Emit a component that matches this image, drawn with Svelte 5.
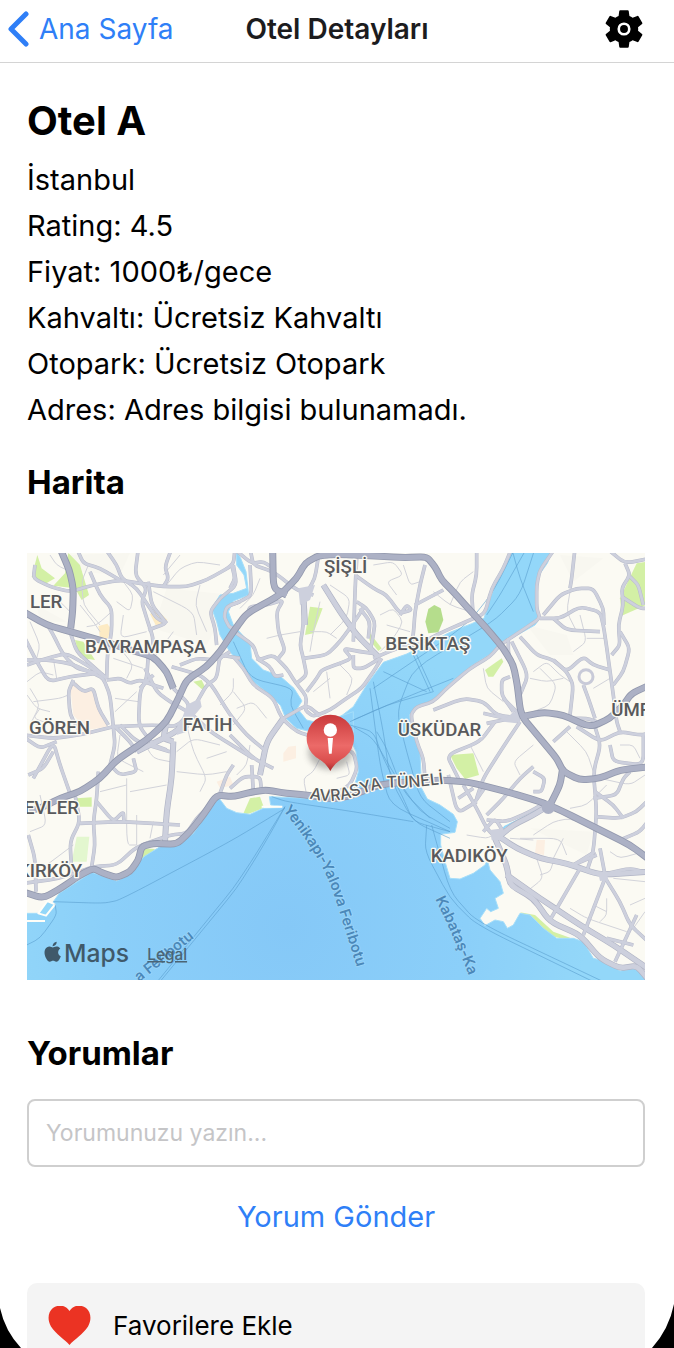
<script>
  const details = [
    'İstanbul',
    'Rating: 4.5',
    'Fiyat: 1000₺/gece',
    'Kahvaltı: Ücretsiz Kahvaltı',
    'Otopark: Ücretsiz Otopark',
    'Adres: Adres bilgisi bulunamadı.'
  ];

  let comment = $state('');

  // Turns a list of "x,y" points into a path whose corners are rounded.
  function curve(points) {
    const p = points.split(' ').map((s) => s.split(',').map(Number));
    let d = `M${p[0][0]} ${p[0][1]}`;
    for (let i = 1; i < p.length - 1; i++) {
      const [x, y] = p[i];
      const [nx, ny] = p[i + 1];
      const [px, py] = p[i - 1];
      d += `L${x + (px - x) * 0.3} ${y + (py - y) * 0.3}Q${x} ${y} ${x + (nx - x) * 0.3} ${y + (ny - y) * 0.3}`;
    }
    const last = p[p.length - 1];
    return d + `L${last[0]} ${last[1]}`;
  }

  const water = [
    '0,1105 75,1105 100,1070 118,1045 160,1018 215,982 245,992 290,1008 332,988 352,955 372,935 420,905 475,900 520,865 560,810 596,758 620,790 650,803 690,808 730,790 785,788 785,784 752,780 748,755 860,760 935,768 1000,735 1015,680 1008,620 985,570 955,520 1000,485 1040,420 1090,352 1160,327 1195,310 1290,262 1355,236 1392,220 1412,155 1440,90 1462,45 1475,0 1605,0 1582,55 1550,100 1546,180 1558,222 1545,240 1460,288 1410,328 1355,362 1290,420 1245,465 1190,488 1168,510 1174,550 1200,620 1205,730 1222,762 1260,780 1300,808 1312,830 1305,862 1262,868 1262,900 1275,950 1290,1000 1320,1002 1360,985 1395,960 1402,945 1410,975 1440,1010 1450,1045 1425,1060 1435,1090 1412,1100 1400,1090 1380,1120 1395,1142 1425,1125 1450,1130 1462,1150 1480,1140 1500,1105 1530,1110 1570,1150 1610,1180 1660,1180 1690,1190 1720,1240 1760,1250 1800,1278 1850,1270 1900,1330 1900,1400 0,1400',
    '600,150 640,145 680,130 672,90 650,60 650,20 662,40 678,80 686,150 640,168 625,200 640,240 690,295 695,340 730,375 780,393 822,430 846,468 832,490 860,525 900,535 1000,500 1000,570 880,562 830,550 797,520 782,482 750,450 700,410 670,370 628,318 600,270 590,230 575,190'
  ];

  const highways = [
    '120,10 148,75 160,130 158,200 152,250',
    '10,200 80,240 150,260 240,285 330,315 400,335 440,380 460,430',
    '10,800 60,790 120,760 180,740 240,700 290,645 380,585 440,530 475,460 500,405 560,365 600,320 640,260 680,205 780,150 830,100 855,55 895,32 950,28 1050,32 1150,38 1220,35 1245,65 1265,105 1300,140 1340,185 1400,250 1450,310 1480,360 1492,420 1500,490 1510,520 1560,580 1610,640 1630,680 1680,705 1740,700 1800,675 1890,665',
    '758,10 760,130 800,150',
    '1505,515 1570,502 1630,510 1690,538 1720,543 1770,520 1810,480 1835,445 1890,420',
    '0,1038 70,1060 130,1025 180,990 220,970 250,985 290,998 330,980 355,945 365,905 400,895 470,898 510,860 550,810 590,750 640,755 700,740 740,735 800,745 860,750 940,762 1000,750 1080,718 1180,710 1270,705 1350,712 1460,740 1560,770 1620,795 1740,855 1830,900 1890,945',
    '1628,670 1620,720 1585,790'
  ];

  const roads = [
    '45,60 40,100 90,125 150,140 220,120 300,105 360,115 430,125 500,125 560,105 640,60 645,10',
    '170,10 190,55 240,70 300,105',
    '255,10 290,60 305,100 350,130 390,190 410,220 440,235 385,255',
    '210,80 240,150 275,190 275,260 262,330 260,400',
    '355,10 345,90 380,130 365,170 380,220 400,280 395,330',
    '385,110 395,180 440,235',
    '455,10 435,65 445,100 430,125',
    '10,345 80,345 150,355 220,385 250,400 270,450 280,545 285,600 270,660',
    '10,270 45,340 85,410 150,395 230,385',
    '75,230 95,260 130,330 170,370 230,385',
    '21,360 80,340 140,325 200,360 260,400',
    '150,260 170,320 220,365 260,400',
    '260,405 300,400 330,415 360,405 400,420 430,430',
    '385,330 380,400 360,440 355,540 400,600 440,615',
    '375,370 410,440 450,470 520,510 570,560 700,640',
    '400,390 360,430',
    '280,545 400,540 470,545 520,490 560,420 590,400 600,330 660,340',
    '455,365 540,390 575,420 630,510 680,570 740,620',
    '480,360 530,340 590,345 630,320',
    '460,430 510,480 490,530',
    '640,60 650,120 600,160 570,200 585,250 590,300',
    '660,170 620,185 612,215 630,250 660,245',
    '10,570 100,580 180,570 280,545',
    '40,700 100,590 120,660 150,745',
    '10,575 60,610 110,590',
    '160,405 145,440 150,510 180,560',
    '155,410 190,440 220,430 235,490 265,540',
    '285,545 330,590 350,620',
    '300,540 350,590 450,620',
    '235,680 230,760 220,830 225,900 215,965',
    '165,750 180,830 150,890 155,980',
    '180,835 300,830 400,835 480,840',
    '10,1015 120,1000 220,965 290,960 350,905 450,870 500,865 530,820 560,790',
    '25,870 45,940 48,1040',
    '230,770 280,830 310,800 312,830',
    '25,690 70,670 100,620',
    '270,660 300,690 350,680 340,640',
    '600,745 620,690 640,660',
    '630,730 670,695 720,695 725,740',
    '695,660 700,740',
    '630,570 700,640 760,670',
    '640,335 670,370 700,420 760,460 785,520 830,560 880,575 940,600 1000,620 1012,670 990,720 930,755',
    '790,520 860,480 900,512',
    '650,265 700,300 715,345 760,330 800,370 825,410 860,455 855,495 880,515 930,495 980,460 1025,430 1060,380 1085,340',
    '710,340 750,365 765,395 790,390',
    '895,35 885,100 850,160 850,240 840,300 850,340 860,390 830,415',
    '690,10 700,60 760,80 830,135 880,150',
    '640,10 695,55 730,50 760,70',
    '690,60 695,150 660,170 630,180',
    '630,130 645,100 635,60',
    '680,210 690,185 740,180 790,165 770,200 775,260 795,315 775,340',
    '1010,40 1005,140 1000,290',
    '850,340 920,330 960,290 1000,235 1030,190',
    '860,440 890,400 905,375 960,355 995,340 970,310 1020,320 1060,325',
    '1005,90 1060,130 1100,150 1140,205 1175,195 1160,180 1140,210',
    '1010,170 1040,190 1065,230 1060,270 1050,320',
    '1020,190 1050,230 1045,280',
    '1000,330 1000,370 1030,370 1080,340',
    '1215,60 1200,120 1185,200 1180,270 1170,310',
    '1185,180 1270,135',
    '1060,340 1130,310 1200,295 1270,260 1350,225 1395,205 1415,130 1450,70 1475,10',
    '1370,10 1370,90 1355,150 1360,215',
    '1605,10 1560,75 1550,120 1550,190 1560,220 1500,260 1440,300 1410,335 1350,370 1280,430 1240,470 1190,485 1172,510 1190,590 1210,640 1215,700',
    '1560,220 1620,220 1680,185 1740,200 1752,250 1780,450 1790,530 1800,560',
    '1570,210 1620,150 1670,130 1720,130 1750,190 1752,240',
    '1665,10 1655,100 1650,130',
    '1600,220 1640,255 1740,260',
    '1500,275 1550,330 1600,345 1640,380 1690,335 1720,360 1770,375',
    '1600,345 1640,380 1660,420 1650,510',
    '1760,10 1815,55 1890,40',
    '1815,55 1830,90 1805,130 1810,180 1795,240 1800,300 1775,330',
    '1805,155 1860,190 1890,190',
    '1830,95 1855,120 1870,180',
    '1800,260 1830,310 1810,380 1780,420',
    '1690,420 1705,460 1725,520',
    '1465,280 1465,330 1490,400',
    '1475,290 1525,390 1500,450',
    '1470,395 1445,405 1445,450 1480,500',
    '1450,460 1500,510',
    '1240,495 1330,460 1390,470 1430,510 1500,520',
    '1400,535 1500,515',
    '1390,505 1500,530',
    '1425,530 1380,590 1280,630 1310,690 1320,710',
    '1500,530 1440,620 1390,700 1370,760',
    '1600,590 1650,545',
    '1640,520 1700,520 1730,530',
    '1720,530 1742,600 1720,680 1730,800 1720,920 1700,980',
    '1670,545 1740,590 1800,560 1860,570 1890,565',
    '1770,600 1780,650 1870,660 1870,570',
    '1285,690 1312,805 1370,770',
    '1315,760 1360,730',
    '1330,720 1370,790 1400,850 1430,880',
    '1400,720 1365,770',
    '1400,810 1450,760 1500,700 1540,665',
    '1540,680 1575,700 1565,740 1540,740',
    '1400,825 1460,830 1530,800 1580,770',
    '1390,860 1425,820 1450,860',
    '1740,910 1755,990',
    '1725,920 1660,960',
    '1660,960 1730,930',
    '1725,815 1800,820 1850,800 1890,760',
    '1725,740 1780,780 1810,820',
    '1720,760 1790,750 1810,700 1830,680',
    '1800,885 1860,860 1890,820',
    '1750,990 1800,1070 1830,1140 1890,1195',
    '1785,1250 1850,1110',
    '1760,1180 1840,1200',
    '1590,1125 1680,970',
    '1690,1170 1755,1000',
    '1740,990 1830,970 1890,985'
  ];

  const arterials = [
    '460,590 455,700 440,800 435,890',
    '440,530 430,580 460,590',
    '350,620 470,560 490,530 530,480',
    '790,520 740,590 720,690',
    '910,120 960,200 1010,270 1075,335',
    '850,150 855,240',
    '1430,880 1480,840 1540,810 1580,785',
    '1430,870 1490,910 1560,940 1640,955 1740,990 1890,980',
    '1425,880 1460,960 1470,1020 1540,1060 1590,1130 1680,1170 1740,1240 1800,1270 1850,1262 1890,1310',
    '1460,990 1560,1060 1680,1140 1780,1200 1890,1275'
  ];

  const streets = [
    '90,30 110,60 150,80', '60,150 110,160 150,200', '180,180 220,230 240,260', '205,60 185,110 190,180 240,240',
    '290,170 330,200 340,150 310,110', '275,200 230,240 200,245', '310,210 300,280 380,260', '400,140 520,200 530,270',
    '440,120 480,70 530,50 600,60', '430,90 480,30', '540,120 525,180 560,260', '460,260 400,340', '300,310 340,360 320,400',
    '280,340 370,370', '30,230 60,300 50,340', '100,340 110,400', '21,410 60,380 100,390', '30,430 60,480 30,540', '40,470 120,460 145,450',
    '60,490 40,520 100,540', '21,450 50,490 90,500', '285,460 355,470', '285,500 350,440', '300,570 290,640 370,680', '370,590 400,640 450,650',
    '470,620 520,580 600,600', '500,540 520,620 560,700 540,740', '470,680 560,690 620,680', '320,700 320,900 350,900', '330,740 440,720',
    '240,740 320,720', '350,810 350,900', '400,830 390,880', '60,750 80,840 30,860', '80,960 160,900', '600,480 640,440 640,400', '640,440 680,490 640,540',
    '560,640 620,620', '740,520 700,470 650,490', '740,280 780,270 840,260', '660,190 700,150 720,100', '870,260 920,260 950,280',
    '900,170 880,260 870,320', '930,120 990,160 980,220 930,270', '920,380 930,460', '960,360 1000,400 980,450', '880,440 930,400', '1060,60 1120,50 1150,90 1100,110 1130,150',
    '1150,60 1170,120 1200,110', '1080,210 1120,190 1150,230 1120,280 1080,320', '1100,240 1170,260', '1290,180 1320,110 1360,80', '1240,140 1290,180 1350,200',
    '1390,370 1400,430 1450,470', '1540,380 1580,350 1620,390 1650,410', '1560,370 1610,420 1590,480 1540,500', '1530,400 1580,410 1630,400',
    '1680,210 1700,290 1660,320', '1650,140 1640,200 1670,260', '1700,280 1760,280', '1720,430 1770,400', '1640,560 1700,620 1720,680', '1800,600 1840,600 1860,640',
    '1540,600 1480,650 1500,690', '1350,600 1390,680', '1760,720 1700,780 1650,790', '1740,700 1830,720 1875,690', '1500,880 1620,880 1640,930', '1540,870 1600,830 1650,820 1720,850',
    '1600,940 1630,880', '1550,940 1570,1000 1520,1040', '1600,950 1590,980 1560,990', '1470,880 1540,885', '1340,870 1400,880 1420,870', '1650,1090 1700,1120 1820,1160', '1760,1060 1760,1110 1740,1130',
    '1720,1080 1760,1100', '1830,1080 1875,1060', '1840,1150 1875,1100', '1780,1000 1875,1010', '1770,920 1800,940 1870,920', '650,690 680,660 690,600', '950,700 990,690 980,650', '860,750 850,700 880,680 900,640'
  ];

  const parks = [
    '52,30 65,70 105,100 70,120 35,95', '145,24 180,60 207,150 185,165 165,130 100,122 135,85',
    '165,285 190,290 225,345 180,338', '520,410 545,405 557,430 545,432', '870,185 908,190 880,265 855,270',
    '1050,265 1085,310 1075,318 1048,285', '665,355 692,385 692,400 668,375', '1395,375 1445,340 1450,350 1420,395 1405,395',
    '1850,55 1890,48 1890,175 1805,212 1800,160', '1290,630 1360,625 1377,690 1335,702 1310,670', '170,760 215,757 215,785 180,785',
    '370,910 405,912 375,945 362,940', '690,760 720,755 732,788 690,805 668,810', '1500,1102 1545,1110 1600,1160 1650,1178 1640,1184 1590,1172 1540,1125'
  ];

  const ferries = [
    '100,1070 250,1075 300,1065 630,890 795,790', '420,1310 560,1140 650,1030 710,935 760,850 795,785', '412,1310 550,1140 640,1030 700,940 795,785',
    '10,1205 60,1180 110,1110 105,1075', '755,755 800,770 1000,800 1180,830', '990,530 1100,480 1240,440', '1000,525 1150,460 1300,400',
    '990,540 1060,560 1090,640 1150,760 1180,830 1290,860', '1060,410 1090,560 1110,700 1180,830 1290,880', '1050,430 1080,660 1110,780 1290,860',
    '1000,545 1060,580 1130,700 1200,800 1290,850', '1485,10 1420,140 1340,240 1060,430', '1520,10 1440,150 1400,210', '1475,10 1500,100 1540,200',
    '1545,10 1500,150 1420,230 1180,370 1130,500 1160,620 1200,760 1290,830', '1090,380 1220,440', '1180,330 1230,440', '1190,330 1240,440',
    '1220,840 1215,920 1290,1060 1370,1140 1720,1310', '1235,840 1290,1040 1370,1130 1750,1310', '1070,560 1100,610 1150,740 1230,820', '640,290 690,400 820,430 810,480 850,550'
  ];

  const places = [
    ['ŞİŞLİ', 912, 84], ['LER', 30, 190], ['BAYRAMPAŞA', 195, 325], ['BEŞİKTAŞ', 1096, 316], ['GÖREN', 27, 568],
    ['FATİH', 488, 558], ['ÜSKÜDAR', 1133, 572], ['ÜMR', 1774, 512], ['EVLER', 12, 808], ['KIRKÖY', -6, 996], ['KADIKÖY', 1232, 950]
  ];
</script>

<div class="screen">
  <header>
    <a class="back" href="#ana-sayfa">
      <svg width="22" height="36" viewBox="0 0 22 36" aria-hidden="true">
        <path d="M19 3 4 18l15 15" fill="none" stroke="currentColor" stroke-width="5" stroke-linecap="round" stroke-linejoin="round" />
      </svg>
      <span>Ana Sayfa</span>
    </a>
    <h1>Otel Detayları</h1>
    <button class="settings" aria-label="Ayarlar">
      <svg viewBox="0 0 512 512" aria-hidden="true">
        <circle cx="256" cy="256" r="48" />
        <path fill-rule="evenodd" d="M256 176a80 80 0 1080 80 80.240 80.240 0 00-80-80zM428.720 256a165.530 165.530 0 01-1.640 22.340l48.690 38.100a11.590 11.590 0 012.630 14.780l-46.060 79.520a11.640 11.640 0 01-14.140 4.930l-57.250-23a176.560 176.560 0 01-38.820 22.670l-8.560 60.780a11.930 11.930 0 01-11.510 9.860h-92.120a12 12 0 01-11.510-9.530l-8.560-60.780A169.300 169.300 0 01151.050 393L93.800 416a11.640 11.640 0 01-14.140-4.920L33.600 331.570a11.590 11.590 0 012.630-14.780l48.690-38.100A174.580 174.580 0 0183.280 256a165.530 165.530 0 011.640-22.340l-48.690-38.100a11.590 11.590 0 01-2.630-14.780l46.060-79.520a11.640 11.640 0 0114.140-4.930l57.250 23a176.560 176.560 0 0138.820-22.670l8.560-60.780A11.930 11.930 0 01209.940 26h92.120a12 12 0 0111.510 9.530l8.560 60.780A169.300 169.300 0 01361 119l57.250-23a11.640 11.640 0 0114.140 4.920l46.060 79.520a11.590 11.590 0 01-2.630 14.780l-48.690 38.100a174.580 174.580 0 011.590 22.680z" />
      </svg>
    </button>
  </header>

  <main>
    <h2 class="name">Otel A</h2>
    <div class="details">
      {#each details as line}<p>{line}</p>{/each}
    </div>

    <h2>Harita</h2>
    <svg class="map" viewBox="21 24 1854 1281" role="group" aria-label="Harita">
      <defs>
        <radialGradient id="sea" gradientUnits="userSpaceOnUse" cx="800" cy="1150" r="900">
          <stop offset="0" stop-color="#85c8f7" />
          <stop offset="0.6" stop-color="#8bcff9" />
          <stop offset="1" stop-color="#93d7f9" />
        </radialGradient>
        <linearGradient id="pin" x1="0" y1="0" x2="0" y2="1">
          <stop offset="0" stop-color="#c9393b" />
          <stop offset="0.55" stop-color="#ec6a68" />
          <stop offset="0.85" stop-color="#d94c4b" />
          <stop offset="1" stop-color="#a82a2b" />
        </linearGradient>
        <filter id="soft" x="-50%" y="-50%" width="200%" height="200%"><feGaussianBlur stdDeviation="9" /></filter>
        <path id="tunnel" d="M868 760Q940 778 1010 752T1130 728T1320 710" />
        <path id="yalova" d="M788 795Q905 935 942 1050T1030 1330" />
        <path id="kabatas" d="M1246 1062Q1300 1170 1370 1350" />
        <path id="feribot" d="M358 1312 560 1148" />
      </defs>
      <rect x="0" y="0" width="1900" height="1330" fill="#fbfaf3" />
      <path d="M140 30 330 24 300 90 180 80zM1620 30 1750 40 1660 110zM1520 240 1640 270 1660 330 1590 330zM440 130 640 150 560 300 400 250zM1530 850 1720 860 1700 930zM50 180 140 230 60 230z" fill="#f8f7f0" />
      {#each parks as p}<polygon points={p} fill="#d3f0a5" />{/each}
      <polygon points="170,875 208,875 200,950 155,950" fill="#e3f7cf" />
      <path d="M1243 180 1262 190 1270 225 1255 262 1225 265 1216 230 1225 192z" fill="#b5dd8c" />
      <path d="M235 243 262 236 272 250 264 280 240 280zM390 207 410 193 442 225 410 246z" fill="#fdebc4" />
      <path d="M150 420 170 412 190 440 220 430 245 500 262 545 200 555 160 510zM805 605 828 602 828 640 790 650 790 625zM1550 885 1575 885 1572 930 1545 925zM590 710 630 695 640 720 600 730z" fill="#fcefe2" />
      {#each streets as s}<path class="street" d={curve(s)} />{/each}
      {#each water as w}<polygon points={w} fill="url(#sea)" stroke="#a5defa" stroke-width="3" stroke-linejoin="round" />{/each}
      <path d="M55 1105 82 1068 105 1078 78 1112z" fill="#93d7f9" stroke="#fffef8" stroke-width="6" />
      <path d="M21 1128H75M725 785h62" stroke="#fffef8" stroke-width="6" />
      <path d="M1435 868 1455 845 1490 828 1530 808 1555 788" fill="none" stroke="#93d7f9" stroke-width="6" />
      {#each ferries as f}<path class="ferry" d={curve(f)} />{/each}
      {#each roads as r}<path class="road edge" d={curve(r)} />{/each}
      {#each arterials as a}<path class="arterial edge" d={curve(a)} />{/each}
      <circle cx="1698" cy="395" r="21" fill="none" stroke="#c8cad8" stroke-width="9" />
      {#each roads as r}<path class="road" d={curve(r)} />{/each}
      {#each arterials as a}<path class="arterial" d={curve(a)} />{/each}
      <path d="M500 480 540 460 545 485 520 515 500 560 470 570 480 540zM835 130 885 120 870 165 840 180zM1410 855 1450 850 1440 885 1415 885zM1480 500 1510 510 1490 535 1450 530zM1735 985 1760 980 1765 1005 1740 1008z" fill="#cdd0dd" />
      {#each highways as h}<path class="highway edge" d={curve(h)} />{/each}
      {#each highways as h}<path class="highway" d={curve(h)} />{/each}
      <circle cx="1585" cy="787" r="20" fill="#acb1c5" />

      {#each places as [name, x, y]}<text class="place" {x} {y}>{name}</text>{/each}
      <text class="tunnel"><textPath href="#tunnel">AVRASYA TÜNELİ</textPath></text>
      <text class="line"><textPath href="#yalova">Yenikapı-Yalova Feribotu</textPath></text>
      <text class="line"><textPath href="#kabatas">Kabataş-Ka</textPath></text>
      <text class="line"><textPath href="#feribot">a Feribotu</textPath></text>

      <ellipse cx="931" cy="622" rx="66" ry="52" fill="#555" opacity="0.4" filter="url(#soft)" />
      <path d="M931 678C922 662 912 652 900 644A71 71 0 1 1 962 644C950 652 940 662 931 678z" fill="url(#pin)" />
      <circle cx="931" cy="555" r="20" fill="#fff" />
      <path d="M923 579h16l-4 47h-8z" fill="#fff" />

      <g fill="#3f596a">
        <path transform="translate(68 1190) scale(2.5)" d="M12.152 6.896c-.948 0-2.415-1.078-3.960-1.040-2.040.027-3.910 1.183-4.961 3.014-2.117 3.675-.546 9.103 1.519 12.090 1.013 1.454 2.208 3.090 3.792 3.039 1.520-.065 2.090-.987 3.935-.987 1.831 0 2.350.987 3.960.948 1.637-.026 2.676-1.480 3.676-2.948 1.156-1.688 1.636-3.325 1.662-3.415-.039-.013-3.182-1.221-3.220-4.857-.026-3.040 2.480-4.494 2.597-4.559-1.429-2.090-3.623-2.324-4.390-2.376-2-.156-3.675 1.090-4.610 1.090zM15.530 3.830c.843-1.012 1.400-2.427 1.245-3.830-1.207.052-2.662.805-3.532 1.818-.780.896-1.454 2.338-1.273 3.714 1.338.104 2.715-.688 3.559-1.701" />
        <text class="brand" x="132" y="1250">Maps</text>
      </g>
      <a href="#legal"><text class="legal" x="382" y="1245">Legal</text></a>
    </svg>

    <h2><label for="comment">Yorumlar</label></h2>
    <input id="comment" type="text" placeholder="Yorumunuzu yazın..." bind:value={comment} />
    <button class="send">Yorum Gönder</button>

    <button class="favorite">
      <svg viewBox="0 0 44 40" aria-hidden="true">
        <path d="M22 40C17 34 8 29 3 21C-1 14 0 6 5 2C11-2 18-1 22 5C26-1 33-2 39 2C44 6 45 14 41 21C36 29 27 34 22 40z" />
      </svg>
      <span>Favorilere Ekle</span>
    </button>
  </main>

  <svg class="corner left" width="24" height="44" viewBox="0 0 24 44" aria-hidden="true"><path d="M0 4Q5 27 21 44H0z" /></svg>
  <svg class="corner right" width="24" height="44" viewBox="0 0 24 44" aria-hidden="true"><path d="M24 0Q19 25 2 44H24z" /></svg>
</div>

<style>
  :global(body) {
    background: #fff;
  }
  .screen {
    position: relative;
    height: 100vh;
    overflow: hidden;
    background: #fff;
    color: #000;
    font-family: Inter, 'Liberation Sans', sans-serif;
  }
  h1,
  h2,
  p {
    margin: 0;
  }
  button {
    padding: 0;
    border: 0;
    background: none;
    color: inherit;
    font: inherit;
    cursor: pointer;
  }
  header {
    display: grid;
    grid-template-columns: 1fr auto 1fr;
    align-items: center;
    padding: 8px 7px 12px;
    border-bottom: 1px solid #d4d4d4;
  }
  .back {
    display: flex;
    align-items: center;
    gap: 10px;
    color: #2f7ff7;
    font-size: 28px;
    line-height: 38px;
    text-decoration: none;
    white-space: nowrap;
  }
  h1 {
    color: #1c1c1e;
    font-size: 28px;
    font-weight: 600;
    line-height: 38px;
  }
  .settings {
    justify-self: end;
    width: 42px;
    height: 42px;
    margin-right: 22px;
  }
  .settings svg {
    display: block;
  }
  main {
    display: flex;
    flex-direction: column;
    padding: 33px 29px 0 27px;
  }
  h2 {
    font-size: 33px;
    font-weight: 700;
    line-height: 44px;
  }
  .name {
    font-size: 40px;
    line-height: 50px;
  }
  .details {
    margin: 11px 0 27px;
    font-size: 29px;
    line-height: 46px;
  }
  .map {
    display: block;
    width: 100%;
    margin: 49px 0 51px;
  }
  .map path {
    stroke-linejoin: round;
  }
  .street {
    fill: none;
    stroke: #d2d3da;
    stroke-width: 3;
  }
  .ferry {
    fill: none;
    stroke: #5a9fce;
    stroke-width: 3;
    opacity: 0.6;
  }
  .road {
    fill: none;
    stroke: #cdd0dd;
    stroke-width: 8;
  }
  .road.edge {
    stroke: #b9bccb;
    stroke-width: 11;
  }
  .arterial {
    fill: none;
    stroke: #cdd0dd;
    stroke-width: 14;
  }
  .arterial.edge {
    stroke: #b0b4c5;
    stroke-width: 18;
  }
  .highway {
    fill: none;
    stroke: #acb1c5;
    stroke-width: 16;
  }
  .highway.edge {
    stroke: #9298ad;
    stroke-width: 21;
  }
  .map text {
    paint-order: stroke;
    stroke-linejoin: round;
  }
  .place {
    fill: #58595c;
    stroke: #fbfaf3;
    stroke-width: 8px;
    font: 500 56px Roboto, sans-serif;
  }
  .tunnel {
    fill: #58595c;
    stroke: #fbfaf3;
    stroke-width: 8px;
    font: 500 48px Inter, sans-serif;
  }
  .line {
    fill: #4b88b9;
    stroke: #9bd5f8;
    stroke-width: 5px;
    font: 600 44px Inter, sans-serif;
  }
  .brand {
    font: 500 74px Inter, sans-serif;
  }
  .legal {
    fill: #4b6474;
    font: 500 46px Inter, sans-serif;
    text-decoration: underline;
  }
  input {
    width: 100%;
    height: 68px;
    margin-top: 24px;
    padding: 0 17px;
    box-sizing: border-box;
    border: 2px solid #cfcfcf;
    border-radius: 8px;
    background: #fff;
    font: 23px Inter, sans-serif;
  }
  input::placeholder {
    color: #c5c5c7;
    opacity: 1;
  }
  .send {
    align-self: center;
    margin: 32px 0 48px;
    color: #2f7ff7;
    font-size: 29px;
    line-height: 36px;
  }
  .favorite {
    display: flex;
    align-items: center;
    gap: 22px;
    height: 84px;
    padding: 0 21px;
    border-radius: 10px;
    background: #f4f4f4;
    font-size: 26px;
  }
  .favorite svg {
    width: 43px;
    height: 39px;
    fill: #eb3323;
  }
  .corner {
    position: absolute;
    bottom: 0;
    pointer-events: none;
  }
  .left {
    left: 0;
  }
  .right {
    right: 0;
  }
</style>
